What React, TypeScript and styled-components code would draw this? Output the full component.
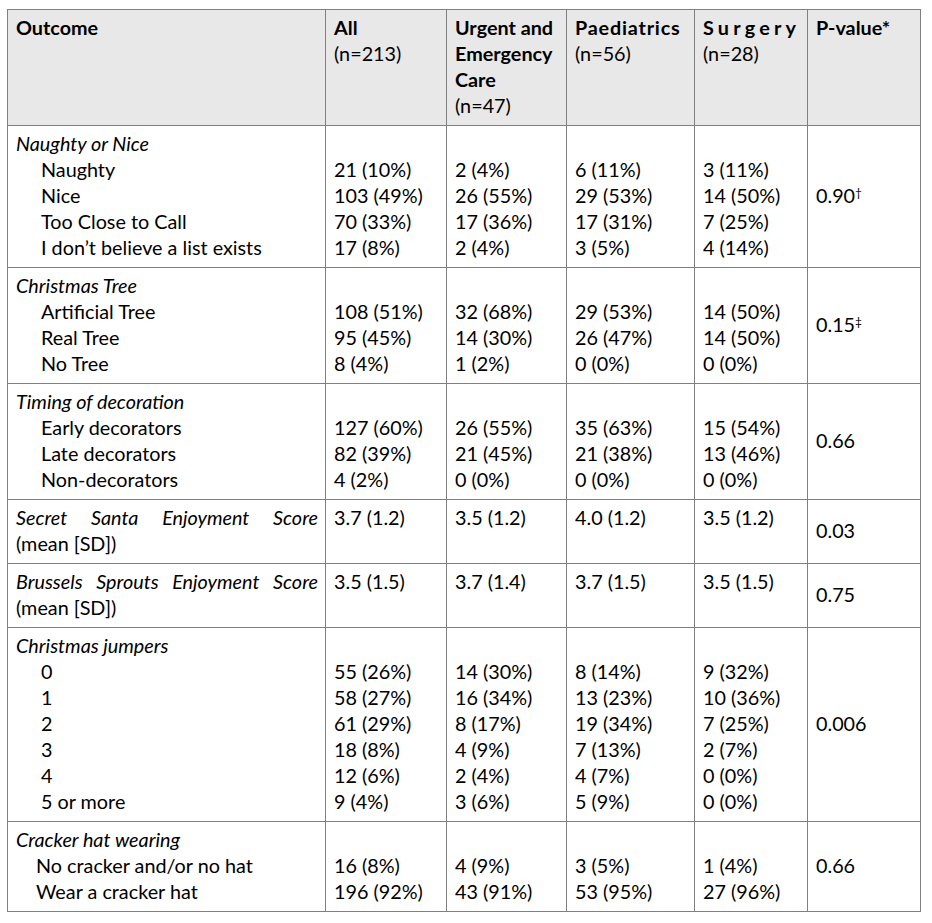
import React from "react";
import styled, { createGlobalStyle } from "styled-components";

const Global = createGlobalStyle`
  html, body { margin: 0; padding: 0; background: #ffffff; }
  body { font-family: Lato, "Noto Sans", sans-serif; color: #000; }
`;

const Page = styled.div`
  padding: 9px 0 0 7px;
`;

const Table = styled.table`
  border-collapse: collapse;
  table-layout: fixed;
  width: 913px;
  font-size: 19.8px;
  line-height: 26px;
`;

const HeadCell = styled.th`
  background: #e8e8e8;
  border: 1px solid #808080;
  padding: 4px 5px 7px 8px;
  text-align: left;
  vertical-align: top;
  font-weight: 700;
`;

const HeadTitle = styled.div<{ $spacing?: number }>`
  font-weight: 700;
  letter-spacing: ${(p) => p.$spacing ?? 0}px;
`;

const HeadSub = styled.div`
  font-weight: 400;
`;

const Cell = styled.td<{ $middle?: boolean }>`
  border: 1px solid #808080;
  padding: 4px 4px 7px 8px;
  vertical-align: ${(p) => (p.$middle ? "middle" : "top")};
  text-align: left;
`;

const Line = styled.div<{ $indent?: number }>`
  padding-left: ${(p) => p.$indent ?? 0}px;
  white-space: nowrap;
`;

const SectionTitle = styled.div`
  font-style: italic;
`;

const Justified = styled.div`
  font-style: italic;
  text-align: justify;
  text-align-last: justify;
  white-space: nowrap;
  margin-right: 3px;
`;

const Mark = styled.sup`
  font-size: 12px;
  line-height: 0;
  vertical-align: 6px;
`;

type Group = {
  kind: "group";
  title: string;
  indent: number;
  rows: string[][];
  p: string;
  mark?: string;
};
type Score = {
  kind: "score";
  title: string;
  values: string[];
  p: string;
};

const sections: (Group | Score)[] = [
  {
    kind: "group",
    title: "Naughty or Nice",
    indent: 25,
    rows: [
      ["Naughty", "21 (10%)", "2 (4%)", "6 (11%)", "3 (11%)"],
      ["Nice", "103 (49%)", "26 (55%)", "29 (53%)", "14 (50%)"],
      ["Too Close to Call", "70 (33%)", "17 (36%)", "17 (31%)", "7 (25%)"],
      ["I don\u2019t believe a list exists", "17 (8%)", "2 (4%)", "3 (5%)", "4 (14%)"],
    ],
    p: "0.90",
    mark: "\u2020",
  },
  {
    kind: "group",
    title: "Christmas Tree",
    indent: 25,
    rows: [
      ["Artificial Tree", "108 (51%)", "32 (68%)", "29 (53%)", "14 (50%)"],
      ["Real Tree", "95 (45%)", "14 (30%)", "26 (47%)", "14 (50%)"],
      ["No Tree", "8 (4%)", "1 (2%)", "0 (0%)", "0 (0%)"],
    ],
    p: "0.15",
    mark: "\u2021",
  },
  {
    kind: "group",
    title: "Timing of decoration",
    indent: 25,
    rows: [
      ["Early decorators", "127 (60%)", "26 (55%)", "35 (63%)", "15 (54%)"],
      ["Late decorators", "82 (39%)", "21 (45%)", "21 (38%)", "13 (46%)"],
      ["Non-decorators", "4 (2%)", "0 (0%)", "0 (0%)", "0 (0%)"],
    ],
    p: "0.66",
  },
  {
    kind: "score",
    title: "Secret Santa Enjoyment Score",
    values: ["3.7 (1.2)", "3.5 (1.2)", "4.0 (1.2)", "3.5 (1.2)"],
    p: "0.03",
  },
  {
    kind: "score",
    title: "Brussels Sprouts Enjoyment Score",
    values: ["3.5 (1.5)", "3.7 (1.4)", "3.7 (1.5)", "3.5 (1.5)"],
    p: "0.75",
  },
  {
    kind: "group",
    title: "Christmas jumpers",
    indent: 25,
    rows: [
      ["0", "55 (26%)", "14 (30%)", "8 (14%)", "9 (32%)"],
      ["1", "58 (27%)", "16 (34%)", "13 (23%)", "10 (36%)"],
      ["2", "61 (29%)", "8 (17%)", "19 (34%)", "7 (25%)"],
      ["3", "18 (8%)", "4 (9%)", "7 (13%)", "2 (7%)"],
      ["4", "12 (6%)", "2 (4%)", "4 (7%)", "0 (0%)"],
      ["5 or more", "9 (4%)", "3 (6%)", "5 (9%)", "0 (0%)"],
    ],
    p: "0.006",
  },
  {
    kind: "group",
    title: "Cracker hat wearing",
    indent: 20,
    rows: [
      ["No cracker and/or no hat", "16 (8%)", "4 (9%)", "3 (5%)", "1 (4%)"],
      ["Wear a cracker hat", "196 (92%)", "43 (91%)", "53 (95%)", "27 (96%)"],
    ],
    p: "0.66",
  },
];

const widths = [318, 121, 120, 128, 113, 113];

export default function App() {
  return (
    <Page>
      <Global />
      <Table>
        <colgroup>
          {widths.map((w, i) => (
            <col key={i} style={{ width: w }} />
          ))}
        </colgroup>
        <thead>
          <tr>
            <HeadCell>
              <HeadTitle>Outcome</HeadTitle>
            </HeadCell>
            <HeadCell>
              <HeadTitle>All</HeadTitle>
              <HeadSub>(n=213)</HeadSub>
            </HeadCell>
            <HeadCell>
              <HeadTitle>Urgent and Emergency Care</HeadTitle>
              <HeadSub>(n=47)</HeadSub>
            </HeadCell>
            <HeadCell>
              <HeadTitle $spacing={0.8}>Paediatrics</HeadTitle>
              <HeadSub>(n=56)</HeadSub>
            </HeadCell>
            <HeadCell>
              <HeadTitle $spacing={4.2}>Surgery</HeadTitle>
              <HeadSub>(n=28)</HeadSub>
            </HeadCell>
            <HeadCell>
              <HeadTitle>P-value*</HeadTitle>
            </HeadCell>
          </tr>
        </thead>
        <tbody>
          {sections.map((s) =>
            s.kind === "group" ? (
              <tr key={s.title}>
                <Cell>
                  <SectionTitle>{s.title}</SectionTitle>
                  {s.rows.map((r) => (
                    <Line key={r[0]} $indent={s.indent}>
                      {r[0]}
                    </Line>
                  ))}
                </Cell>
                {[1, 2, 3, 4].map((c) => (
                  <Cell key={c}>
                    <Line>&nbsp;</Line>
                    {s.rows.map((r) => (
                      <Line key={r[0]}>{r[c]}</Line>
                    ))}
                  </Cell>
                ))}
                <Cell $middle>
                  {s.p}
                  {s.mark && <Mark>{s.mark}</Mark>}
                </Cell>
              </tr>
            ) : (
              <tr key={s.title}>
                <Cell>
                  <Justified>{s.title}</Justified>
                  <Line>(mean [SD])</Line>
                </Cell>
                {s.values.map((v, i) => (
                  <Cell key={i}>
                    <Line>{v}</Line>
                  </Cell>
                ))}
                <Cell $middle>{s.p}</Cell>
              </tr>
            )
          )}
        </tbody>
      </Table>
    </Page>
  );
}
